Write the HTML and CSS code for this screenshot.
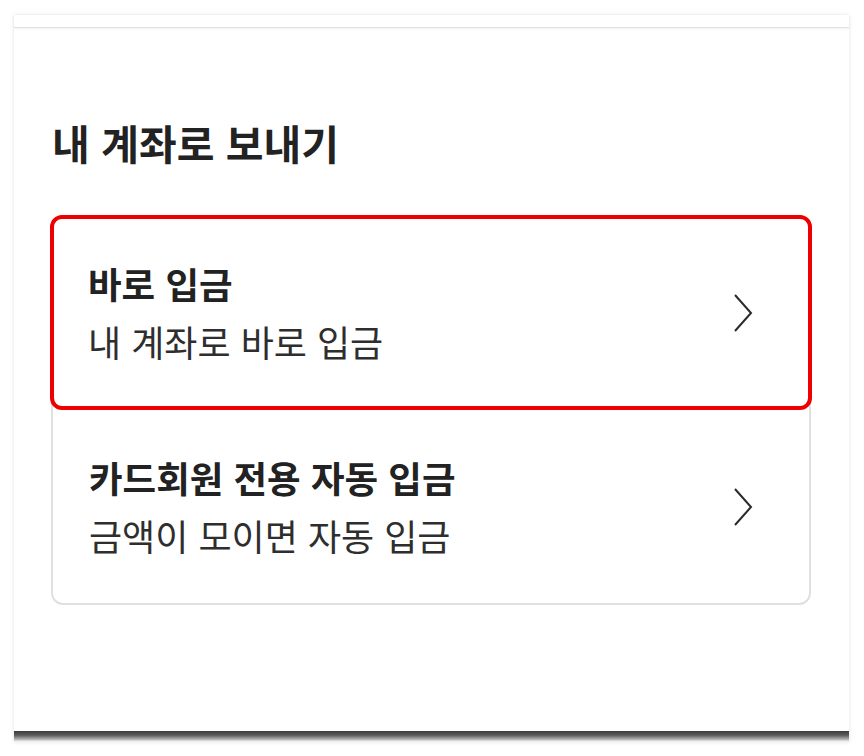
FILE: index.html
```html
<!DOCTYPE html>
<html lang="ko">
<head>
<meta charset="utf-8">
<link rel="stylesheet" href="styles.css">
</head>
<body>
<div class="panel">
  <div class="topbar"></div>
  <div class="content">
    <h2 class="title">내 계좌로 보내기</h2>
    <div class="group">
      <div class="item selected">
        <div class="texts">
          <div class="item-title">바로 입금</div>
          <div class="item-sub">내 계좌로 바로 입금</div>
        </div>
        <svg class="chev" width="20" height="38" viewBox="0 0 20 38"><path d="M2 1 L18 19 L2 37" fill="none" stroke="#2a2a2a" stroke-width="2"/></svg>
      </div>
      <div class="item">
        <div class="texts">
          <div class="item-title">카드회원 전용 자동 입금</div>
          <div class="item-sub">금액이 모이면 자동 입금</div>
        </div>
        <svg class="chev" width="20" height="38" viewBox="0 0 20 38"><path d="M2 1 L18 19 L2 37" fill="none" stroke="#2a2a2a" stroke-width="2"/></svg>
      </div>
    </div>
  </div>
  <div class="bottomshadow"></div>
</div>
</body>
</html>
```

FILE: styles.css
```css
html, body {
  margin: 0;
  padding: 0;
  background: #ffffff;
}
body {
  font-family: "Noto Sans CJK KR", "Noto Sans", sans-serif;
  color: #222;
  padding: 15px 15px 0 14px;
  width: 864px;
  height: 756px;
  box-sizing: border-box;
}
.panel {
  width: 835px;
  height: 727px;
  background: #fff;
  box-shadow: 0 0 4px rgba(0,0,0,0.12);
  display: flex;
  flex-direction: column;
  position: relative;
}
.topbar {
  height: 12px;
  border-bottom: 1px solid #e2e2e2;
  box-shadow: 0 1px 2px rgba(0,0,0,0.06);
}
.content {
  flex: 1;
  padding: 0 38px 0 37px;
}
.title {
  margin: 87px 0 0 1px;
  font-size: 41px;
  font-weight: 700;
  line-height: 54px;
  color: #222;
}
.group {
  margin-top: 46px;
  width: 756px;
  border: 2px solid #e0e0e0;
  border-radius: 12px;
}
.item {
  height: 193px;
  display: flex;
  align-items: center;
  padding: 0 56px 0 36px;
  box-sizing: border-box;
}
.item.selected {
  margin: -2px -3px 0 -3px;
  height: 195px;
  border: 4px solid #ee0000;
  border-radius: 12px;
  padding: 0 55px 0 34px;
}
.texts {
  flex: 1;
  display: flex;
  flex-direction: column;
  gap: 9px;
}
.item-title {
  font-size: 36.5px;
  font-weight: 700;
  line-height: 48px;
  color: #222;
}
.item-sub {
  font-size: 36px;
  font-weight: 400;
  line-height: 48px;
  color: #2e2e2e;
}
.chev {
  display: block;
  flex: none;
}
.bottomshadow {
  height: 11px;
  background: linear-gradient(#3a3a3a, #5e5e5e 40%, #b0b0b0 75%, rgba(255,255,255,0));
}
```
